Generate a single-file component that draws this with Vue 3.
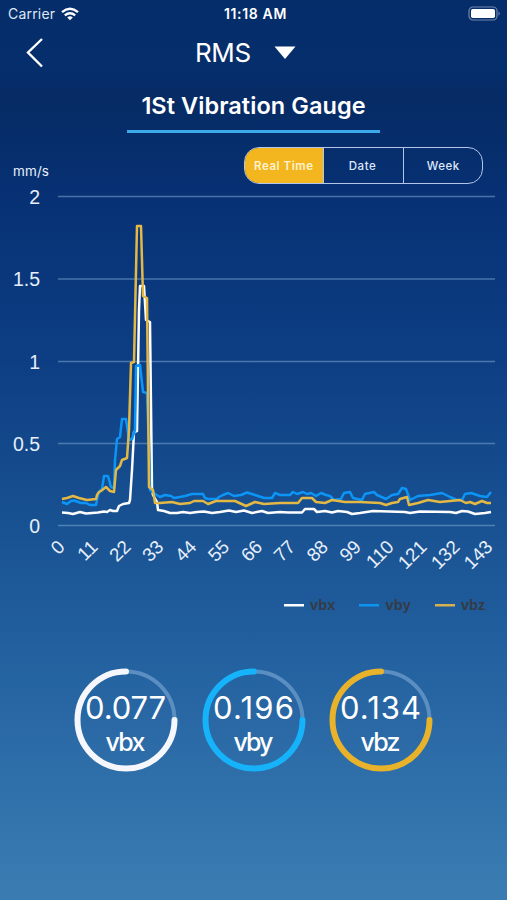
<script setup>
import { ref } from 'vue'

const tabs = ['Real Time', 'Date', 'Week']
const active = ref('Real Time')

const yTicks = [
  { label: '2', y: 196.5 },
  { label: '1.5', y: 279 },
  { label: '1', y: 361.5 },
  { label: '0.5', y: 443.5 },
  { label: '0', y: 525.5 }
]
const xTicks = Array.from({ length: 14 }, (_, i) => ({ label: String(i * 11), x: 66 + i * 32.9 }))

const series = [
  {
    name: 'vbx',
    color: '#fdfdff',
    points: '62,512.5 68,513 73,514 80,512 86,513.5 92,513 98,512.5 104,511.5 107,512 110,510 113,511 117,511 119,506 123,504 129,503 130,500 132,470 134,432 137,431 139,310 140,286 144,286 146,320 150,322 152,490 153,495 157,502 158,510 164,511 170,513 177,513 183,512 190,513 197,512 204,511.5 212,513 220,512 229,510.5 236,512 244,510.5 252,513 262,511 268,513 280,512 288,512.5 302,512.5 305,509 314,509 317,512 325,511 332,512.5 338,511 347,512 352,514 360,513 373,511 405,512 410,513 420,511.5 450,512 456,513 462,511 468,511.5 475,514 485,513 491,512'
  },
  {
    name: 'vby',
    color: '#0c95f7',
    points: '62,502 67,504 71,501 74,500.5 81,503 86,503 90,505 96,505 98,495 99,492 102,489 104,476 108,476 111,487 114,488 115,460 117,439 120,437 122,419 126,419 129,440 132,439 135,430 136,366 140,365 143,392 147,393 149,450 150,490 155,494 160,497 165,495 171,496 174,498 180,497 185,496 192,494 203,494 205,498 208,499 217,499 219,497 223,495 228,493 234,496 241,495 247,492.5 255,495 264,498 272,498 275,493 280,495 285,495 290,495 293,492 297,494 303,492 307,494 311,493 316,496 321,493 326,495 330,496 334,500 341,499 344,493 350,492 353,498 362,500 365,494 374,492 377,495 386,499 392,495 398,494 402,488 406,489 410,500 418,496 430,495 442,493 450,497 457,500 462,500 465,494 471,493 480,496 487,497 491,492'
  },
  {
    name: 'vbz',
    color: '#e4b845',
    points: '62,499 67,498 73,496 79,498 87,500 96,499 97,495 99,492 101,491 106,487 110,491 114,492 116,470 120,466 122,460 127,458 129,430 131,363 134,362 137,226 141,226 143,296 147,298 149,487 153,490 155,503 160,503 172,502 180,504 190,503 194,501 203,501 208,504 216,501 225,501 235,501 246,506 255,502 264,504 280,503 298,503 302,498 312,498 316,502 325,503 332,500 345,502 360,502 380,503 386,505 392,503 398,502 400,499 407,497 409,505 418,503 428,500 440,502 460,500 466,503 470,502 475,504 482,501 487,503 491,503'
  }
]

const legend = [
  { name: 'vbx', color: '#fdfdff' },
  { name: 'vby', color: '#0c95f0' },
  { name: 'vbz', color: '#d6b24c' }
]
const gauges = [
  { name: 'vbx', value: '0.077', color: '#f5f7fd' },
  { name: 'vby', value: '0.196', color: '#16b3fb' },
  { name: 'vbz', value: '0.134', color: '#e8b22b' }
]
</script>

<template>
  <main class="screen">
    <header class="status">
      <div class="carrier">
        <span>Carrier</span>
        <svg width="18" height="14" viewBox="0 0 18 14" fill="none" stroke="#fff" stroke-width="2.4">
          <path d="M1 5.1Q9-1.7 17 5.1M3.8 8.3Q9 4 14.2 8.3" />
          <path d="M6.2 10.4Q9 8.2 11.8 10.4L9 13.2Z" fill="#fff" stroke="none" />
        </svg>
      </div>
      <span class="clock">11:18 AM</span>
      <svg class="battery" width="34" height="16" viewBox="0 0 34 16">
        <rect x="2" y="1" width="28" height="13" rx="4" fill="none" stroke="#7185ae" stroke-width="1.2" />
        <rect x="4" y="3" width="24" height="9" rx="1.8" fill="#fff" />
        <path d="M31.5 5.2Q34 7.5 31.5 9.8Z" fill="#7185ae" />
      </svg>
    </header>

    <nav class="navbar">
      <svg class="back" width="20" height="32" viewBox="0 0 20 32" fill="none" stroke="#fff" stroke-width="2.4">
        <path d="M17 2L3 15.5L17 29.5" />
      </svg>
      <span class="title">RMS</span>
      <svg class="caret" width="22" height="14" viewBox="0 0 22 14"><path d="M.5 .5H21.5L11 13Z" fill="#fff" /></svg>
    </nav>

    <div class="heading"><h1>1St Vibration Gauge</h1></div>

    <div class="tabs">
      <button v-for="t in tabs" :key="t" :class="{ on: t === active }" @click="active = t">{{ t }}</button>
    </div>

    <svg class="chart" width="507" height="401" viewBox="0 184 507 401">
      <text class="unit" x="13" y="175.5" textLength="36">mm/s</text>
      <g v-for="t in yTicks" :key="t.label">
        <line x1="58" x2="495" :y1="t.y" :y2="t.y" stroke="#7da5d2" stroke-opacity=".55" stroke-width="1.3" />
        <text class="tick" x="40" :y="t.y + 7" text-anchor="end">{{ t.label }}</text>
      </g>
      <polyline
        v-for="s in series" :key="s.name" :points="s.points" :stroke="s.color"
        fill="none" stroke-width="2.5" stroke-linejoin="round"
      />
      <text
        v-for="t in xTicks" :key="t.label" class="tick slanted" text-anchor="end"
        :transform="`translate(${t.x} 548) rotate(-45)`"
      >{{ t.label }}</text>
    </svg>

    <ul class="legend">
      <li v-for="l in legend" :key="l.name">
        <svg width="20" height="3"><rect width="20" height="2.5" :fill="l.color" /></svg>
        <span>{{ l.name }}</span>
      </li>
    </ul>

    <section class="gauges">
      <div v-for="g in gauges" :key="g.name" class="gauge">
        <svg width="104" height="104" viewBox="0 0 104 104" fill="none">
          <path d="M52 3.5A48.5 48.5 0 0 1 100.5 52" stroke="#5b8fc2" stroke-width="4" />
          <path d="M100.5 52A48.5 48.5 0 1 1 52 3.5" :stroke="g.color" stroke-width="6" stroke-linecap="round" />
          <text class="value" x="51.5" y="50.5" text-anchor="middle" textLength="81">{{ g.value }}</text>
          <text class="name" x="51.5" y="82.5" text-anchor="middle" textLength="40">{{ g.name }}</text>
        </svg>
      </div>
    </section>
  </main>
</template>

<style>
body { margin: 0; background: #3b7cb2; }
</style>

<style scoped>
.screen {
  box-sizing: border-box;
  width: 507px;
  height: 900px;
  overflow: hidden;
  color: #fff;
  font-family: Inter, "Liberation Sans", sans-serif;
  background: linear-gradient(#052d6a 0, #052e6c 70px, #062b65 95px, #062d69 130px, #073175 200px, #0d3e84 360px, #185191 520px, #22609f 650px, #3b7db3 900px);
}
.status {
  display: grid;
  grid-template-columns: 1fr auto 1fr;
  align-items: center;
  height: 28px;
  padding: 0 6px 0 8px;
  font-size: 14px;
  line-height: 28px;
}
.carrier { display: flex; align-items: center; gap: 6px; letter-spacing: .2px; color: #dfe7f4; }
.clock { padding-left: 2px; font-size: 14px; font-weight: 600; letter-spacing: .65px; }
.battery { justify-self: end; }
.navbar { display: flex; align-items: center; height: 49px; padding-left: 25px; }
.title { margin-left: 150px; font-size: 26px; line-height: 49px; letter-spacing: -.4px; }
.caret { margin-left: 23px; }
.heading { display: flex; justify-content: center; }
h1 {
  box-sizing: border-box;
  width: 253px;
  height: 56px;
  margin: 0;
  padding-top: 14px;
  border-bottom: 3px solid #3ba9ea;
  text-align: center;
  font-size: 23.5px;
  font-weight: 600;
  line-height: 30px;
  letter-spacing: .06px;
  white-space: nowrap;
}
.tabs {
  display: flex;
  box-sizing: border-box;
  width: 239px;
  height: 37px;
  margin: 14px 0 0 244px;
  border: 1.5px solid #b3c6ea;
  border-radius: 15px;
  overflow: hidden;
}
button {
  flex: 1;
  padding: 0;
  border: 0;
  border-left: 1.5px solid #b3c6ea;
  background: none;
  color: #dfe8fa;
  font: 500 11.5px Inter, sans-serif;
  letter-spacing: .5px;
}
button:first-child { border-left: 0; }
button:nth-child(2) { padding-right: 2px; }
button.on { background: #f3b61f; color: #fff3cf; font-weight: 600; letter-spacing: .55px; }
.chart { display: block; overflow: visible; }
.chart text { fill: #e6effb; }
.unit { font: 13.5px Inter, sans-serif; }
.tick { font: 19.5px "Liberation Sans", sans-serif; }
.slanted { font-size: 18.8px; }
.legend {
  display: flex;
  justify-content: flex-end;
  gap: 24px;
  height: 40px;
  margin: 0;
  padding: 0 21.5px 0 0;
  list-style: none;
}
.legend li { display: flex; align-items: center; gap: 6px; color: #343b45; font: bold 14.5px "Liberation Sans", sans-serif; letter-spacing: .15px; }
.gauges { display: flex; gap: 23.5px; margin-top: 43px; padding-left: 74px; }
.gauge svg { display: block; }
.gauge text { fill: #fff; }
.value { font: 31px Inter, sans-serif; }
.name { font: 500 25px Inter, sans-serif; }
</style>
